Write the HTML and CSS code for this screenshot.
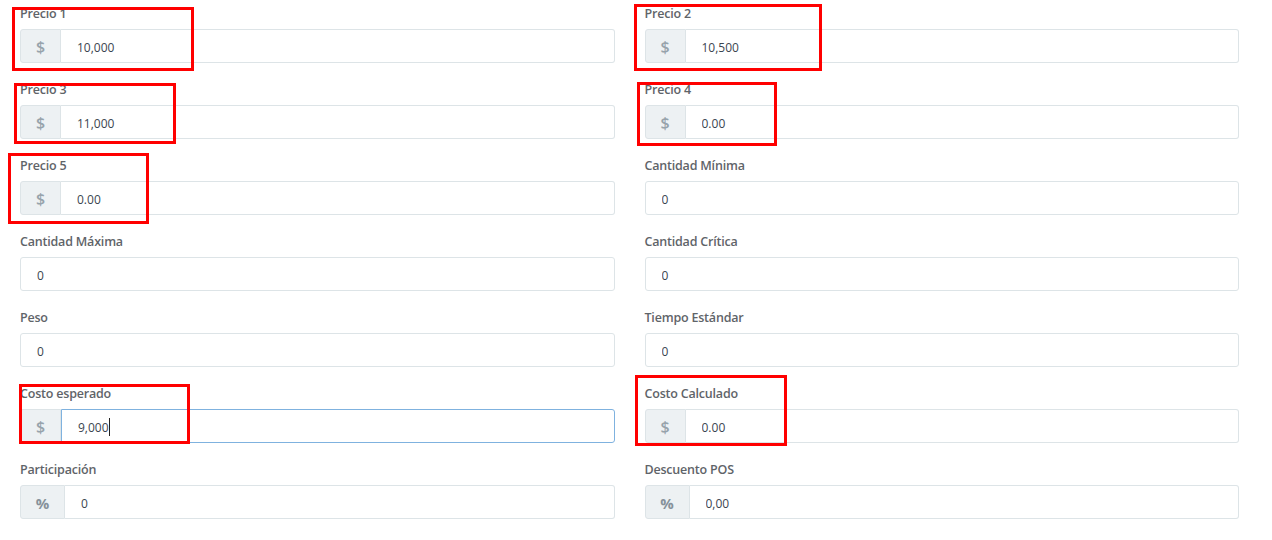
FILE: index.html
```html
<!DOCTYPE html>
<html lang="es">
<head>
<meta charset="utf-8">
<title>Precios</title>
<link rel="stylesheet" href="styles.css">
</head>
<body>
<form class="form">
  <div class="field">
    <label class="label">Precio 1</label>
    <div class="group"><span class="addon">$</span><input class="input" type="text" value="10,000"></div>
  </div>
  <div class="field">
    <label class="label">Precio 2</label>
    <div class="group"><span class="addon">$</span><input class="input" type="text" value="10,500"></div>
  </div>
  <div class="field">
    <label class="label">Precio 3</label>
    <div class="group"><span class="addon">$</span><input class="input" type="text" value="11,000"></div>
  </div>
  <div class="field">
    <label class="label">Precio 4</label>
    <div class="group"><span class="addon">$</span><input class="input" type="text" value="0.00"></div>
  </div>
  <div class="field">
    <label class="label">Precio 5</label>
    <div class="group"><span class="addon">$</span><input class="input" type="text" value="0.00"></div>
  </div>
  <div class="field">
    <label class="label">Cantidad Mínima</label>
    <div class="group"><input class="input solo" type="text" value="0"></div>
  </div>
  <div class="field">
    <label class="label">Cantidad Máxima</label>
    <div class="group"><input class="input solo" type="text" value="0"></div>
  </div>
  <div class="field">
    <label class="label">Cantidad Crítica</label>
    <div class="group"><input class="input solo" type="text" value="0"></div>
  </div>
  <div class="field">
    <label class="label">Peso</label>
    <div class="group"><input class="input solo" type="text" value="0"></div>
  </div>
  <div class="field">
    <label class="label">Tiempo Estándar</label>
    <div class="group"><input class="input solo" type="text" value="0"></div>
  </div>
  <div class="field">
    <label class="label">Costo esperado</label>
    <div class="group"><span class="addon">$</span><div class="input focus"><span>9,000</span><span class="caret"></span></div></div>
  </div>
  <div class="field">
    <label class="label">Costo Calculado</label>
    <div class="group"><span class="addon">$</span><input class="input" type="text" value="0.00"></div>
  </div>
  <div class="field">
    <label class="label">Participación</label>
    <div class="group"><span class="addon wide">%</span><input class="input" type="text" value="0"></div>
  </div>
  <div class="field">
    <label class="label">Descuento POS</label>
    <div class="group"><span class="addon wide">%</span><input class="input" type="text" value="0,00"></div>
  </div>
</form>

<div class="mark m1"></div>
<div class="mark m2"></div>
<div class="mark m3"></div>
<div class="mark m4"></div>
<div class="mark m5"></div>
<div class="mark m6"></div>
<div class="mark m7"></div>
</body>
</html>
```

FILE: styles.css
```css
html, body {
  margin: 0;
  padding: 0;
  background: #ffffff;
}

body {
  font-family: "Open Sans", "Liberation Sans", sans-serif;
  color: #3f4850;
  width: 1272px;
  height: 540px;
  overflow: hidden;
  position: relative;
}

.form {
  display: grid;
  grid-template-columns: 1fr 1fr;
  column-gap: 30px;
  row-gap: 18px;
  padding: 5px 33px 0 20px;
}

.field {
  display: flex;
  flex-direction: column;
}

.label {
  font-size: 12.5px;
  font-weight: 600;
  line-height: 18px;
  height: 18px;
  color: #5f6469;
  margin-bottom: 6px;
  letter-spacing: -0.2px;
}

.group {
  display: flex;
  height: 34px;
}

.addon {
  box-sizing: border-box;
  width: 41px;
  flex: 0 0 auto;
  display: flex;
  align-items: center;
  justify-content: center;
  padding-top: 1px;
  background: #edf1f3;
  border: 1px solid #dde4e7;
  border-radius: 3px 0 0 3px;
  color: #97a3ab;
  font-size: 16px;
  font-weight: 600;
}

.addon.wide {
  width: 45px;
  color: #86919a;
  font-weight: 700;
  font-size: 15px;
}

.input {
  box-sizing: border-box;
  flex: 1 1 auto;
  min-width: 0;
  height: 34px;
  margin: 0;
  border: 1px solid #dde4e7;
  border-left: none;
  border-radius: 0 3px 3px 0;
  padding: 2px 0 0 16px;
  font-family: "Open Sans", "Liberation Sans", sans-serif;
  font-size: 12px;
  color: #3b4550;
  background: #ffffff;
  outline: none;
  display: flex;
  align-items: center;
}

.input.solo {
  border-left: 1px solid #dde4e7;
  border-radius: 3px;
}

.input.focus {
  border: 1px solid #7fb2df;
}

.caret {
  display: inline-block;
  width: 1px;
  height: 18px;
  background: #222;
}

.mark {
  position: absolute;
  box-sizing: border-box;
  border: 3px solid #ff0000;
}

.m1 { left: 12px; top: 7px; width: 182px; height: 64px; }
.m2 { left: 634px; top: 4px; width: 188px; height: 67px; }
.m3 { left: 14px; top: 83px; width: 162px; height: 61px; }
.m4 { left: 637px; top: 82px; width: 140px; height: 64px; }
.m5 { left: 8px; top: 153px; width: 141px; height: 71px; }
.m6 { left: 19px; top: 384px; width: 171px; height: 60px; }
.m7 { left: 635px; top: 375px; width: 152px; height: 71px; }
```
